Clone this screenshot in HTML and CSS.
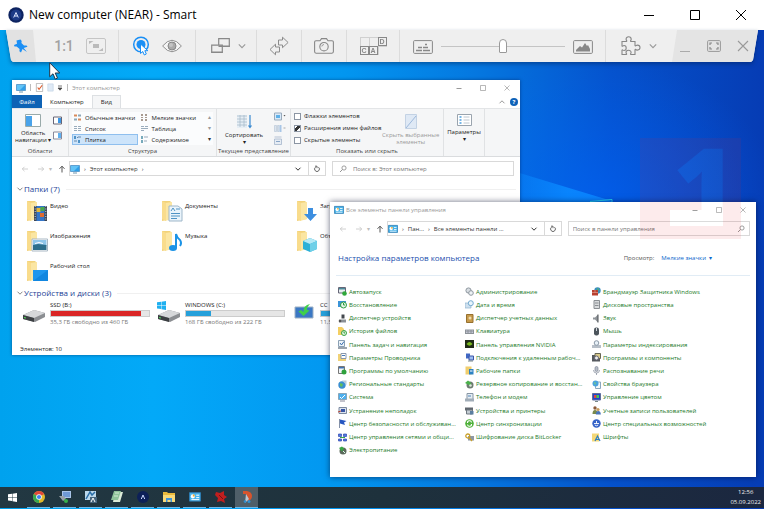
FILE: index.html
```html
<!DOCTYPE html>
<html lang="ru">
<head>
<meta charset="utf-8">
<title>New computer (NEAR) - Smart</title>
<link rel="stylesheet" href="styles.css">
</head>
<body>
<svg class="defs" aria-hidden="true">
  <symbol id="folder" viewBox="0 0 22 22"><path d="M1 1h8l2 2v16l-10 2z" fill="#f2d27a"/><path d="M4 3l7-1v17l-7 2z" fill="#fbe6a3"/><path d="M1 1l4 2v18l-4-2z" fill="#f9dc8c"/></symbol>
  <symbol id="monitor" viewBox="0 0 10 10"><path d="M.5 1.500h9v6h-9z" fill="#2f9fe8" stroke="#3b7fb8" stroke-width=".6"/><path d="M1 2h8l-5 5H1z" fill="#62c3f6"/><path d="M3 9h4" stroke="#6f96b0"/></symbol>
  <symbol id="panel" viewBox="0 0 10 10"><path d="M.4 1.400h9.200v7H.4z" fill="#49b4ea" stroke="#2d7db4" stroke-width=".8"/><circle cx="3.200" cy="4.500" r="1.700" fill="#fff"/><path d="M3.200 4.500V2.800A1.700 1.700 0 0 1 4.900 4.500z" fill="#f2a62b"/><path d="M6 3.500h2.500M6 5.500h2.500M2 7.200h6.500" stroke="#fff" stroke-width=".8"/></symbol>
  <symbol id="search" viewBox="0 0 8 8"><circle cx="5" cy="3" r="2.100" fill="none" stroke="currentColor" stroke-width=".8"/><path d="M3.500 4.500L1 7" stroke="currentColor" stroke-width=".9"/></symbol>
  <symbol id="back" viewBox="0 0 8 8"><path d="M7 4H1.300M3.500 1.800L1.300 4l2.200 2.200" fill="none" stroke="currentColor" stroke-width=".8"/></symbol>
  <symbol id="next" viewBox="0 0 8 8"><path d="M1 4h5.700M4.500 1.800L6.700 4 4.500 6.200" fill="none" stroke="currentColor" stroke-width=".8"/></symbol>
  <symbol id="up" viewBox="0 0 8 8"><path d="M4 7.500V1.200M1.500 3.800L4 1.200l2.500 2.600" fill="none" stroke="currentColor" stroke-width="1"/></symbol>
  <symbol id="down" viewBox="0 0 8 8"><path d="M1.500 2.700L4 5.200l2.500-2.500" fill="none" stroke="currentColor" stroke-width="1"/></symbol>
  <symbol id="refresh" viewBox="0 0 8 8"><path d="M5.500 2.200A2.400 2.400 0 1 1 2.500 2.200M2 1.200h2v2" fill="none" stroke="currentColor" stroke-width=".9"/></symbol>
  <symbol id="min" viewBox="0 0 8 8"><path d="M1.500 4.500h5" stroke="currentColor" stroke-width="1"/></symbol>
  <symbol id="max" viewBox="0 0 8 8"><path d="M1.500 1.500h5v5h-5z" fill="none" stroke="currentColor" stroke-width=".7"/></symbol>
  <symbol id="close" viewBox="0 0 8 8"><path d="M1.500 1.500l5 5m0-5l-5 5" stroke="currentColor" stroke-width=".7"/></symbol>
  <symbol id="chev" viewBox="0 0 10 10"><path d="M1 3l4 4 4-4" fill="none" stroke="currentColor" stroke-width="1.400"/></symbol>
  <symbol id="drive" viewBox="0 0 24 16"><path d="M1 8L12 3l11 3v4l-10 5L1 12z" fill="#8b8e92"/><path d="M1 8L12 3l11 3-11 5z" fill="#d6d8da"/><path d="M1 8l11 3v4L1 12z" fill="#3c4043"/><path d="M2 10.500l2 .5" stroke="#52e05a"/></symbol>
  <symbol id="win" viewBox="0 0 10 10"><path d="M0 1.500L4.500.9v3.800H0zM5 .8L10 0v4.700H5zM0 5.200h4.500V9L0 8.400zM5 5.200h5V10l-5-.8z" fill="currentColor"/></symbol>
</svg>

<header class="titlebar">
  <svg class="app-logo" viewBox="0 0 16 16"><circle cx="8" cy="8" r="7.700" fill="#0d2360"/><circle cx="8" cy="8" r="5.500" fill="#1c3a86"/><path d="M5.700 10.500L8 5.500l2.300 5M6.600 9h2.800" fill="none" stroke="#dce6ff" stroke-width="1"/></svg>
  <h1>New computer (NEAR) - Smart</h1>
  <button aria-label="Minimize"><svg viewBox="0 0 12 12"><path d="M1 6.500h10" stroke="#000"/></svg></button>
  <button aria-label="Maximize"><svg viewBox="0 0 12 12"><path d="M1.500 1.500h9v9h-9z" fill="none" stroke="#000"/></svg></button>
  <button aria-label="Close"><svg viewBox="0 0 12 12"><path d="M1 1l10 10M11 1L1 11" stroke="#000"/></svg></button>
</header>

<main class="desktop">
  <svg class="beam" viewBox="0 0 764 479" preserveAspectRatio="none" aria-hidden="true">
    <defs>
      <linearGradient id="bm"><stop offset="0" stop-color="#0a8cff" stop-opacity=".2"/><stop offset=".6" stop-color="#0a88ff" stop-opacity=".9"/><stop offset="1" stop-color="#0a80ff"/></linearGradient>
    </defs>
    <path d="M500 137L612 171v28H500z" fill="url(#bm)"/>
    <path d="M590 171.500l22-2v3" fill="none" stroke="#25d5f5"/>
  </svg>

  <div class="toolbar-shadow">
    <div class="toolbar">
      <div class="group pin"><button aria-label="Pin"><svg width="16" height="16" viewBox="0 0 16 16"><path d="M3 2.500L7 1.500l1.200 1.400-.3 2 2.600 2.700 2.500-.2 1 1.400-3.800 1.300 3.300 4-4.500-3-1.500 3.400-1.600-1.300.2-2.200-3-2.600-2.100.2L.5 7l3-1.300z" transform="translate(.5 0)" fill="#1a8ff5"/></svg></button></div>
      <div class="group g-scale">
        <button class="ratio">1:1</button>
        <button aria-label="Fit"><svg width="20" height="16" viewBox="0 0 20 16"><rect x=".5" y=".5" width="19" height="15" rx="1.500" fill="none" stroke="#c5c5c5"/><path d="M3 6V3h4.500zM17 10v3h-4.500z" fill="#bbb"/><rect x="7" y="6" width="6" height="4" fill="#bbb"/></svg></button>
      </div>
      <div class="group g-view">
        <button aria-label="Control"><svg width="18" height="20" viewBox="0 0 18 20"><circle cx="9" cy="8.500" r="7.300" fill="none" stroke="#1a8ff5" stroke-width="1.500"/><circle cx="9" cy="8.500" r="4.500" fill="#1a8ff5"/><path d="M8.500 8v9.500l2.300-2 1.500 3.500 2-1-1.500-3.300h3z" fill="#fff" stroke="#1a8ff5"/></svg></button>
        <button aria-label="View"><svg width="20" height="14" viewBox="0 0 20 14"><path d="M.6 7Q10-4.500 19.400 7 10 18.500.6 7z" fill="#f4f4f4" stroke="#8f8f8f"/><circle cx="10" cy="7" r="4" fill="#aaa" stroke="#888"/><circle cx="9" cy="6" r="2" fill="#c4c4c4"/></svg></button>
      </div>
      <div class="group g-screens">
        <button aria-label="Monitors"><svg width="19" height="16" viewBox="0 0 19 16"><path d="M.7 7.200h10.600v7.300H.7zM7.700 7V.7h10.600v7.800h-7" fill="none" stroke="#888" stroke-width="1.200"/><path d="M.5 14.300h11M7.500 8.300h11" stroke="#888" stroke-width="1.600"/></svg></button>
        <button aria-label="Monitor list"><svg width="8" height="8"><use href="#chev"/></svg></button>
      </div>
      <div class="group g-one"><button aria-label="Transfer"><svg width="20" height="20" viewBox="0 0 20 20"><path d="M9.500 4h4V1.200l5.600 5.300-5.600 5.200V9h-4zM10.500 11h-4V8.200L1 13.500l5.500 5.300V16h4z" fill="none" stroke="#8c8c8c"/></svg></button></div>
      <div class="group g-one"><button aria-label="Screenshot"><svg width="20" height="16" viewBox="0 0 20 16"><path d="M2 2.700h4L7.500.6h5L14 2.700h4q1.400 0 1.400 1.400v9.500q0 1.600-1.400 1.600H2Q.6 15.200.6 13.600V4.100Q.6 2.700 2 2.700z" fill="none" stroke="#888" stroke-width="1.100"/><circle cx="10" cy="8.700" r="4.200" fill="none" stroke="#888" stroke-width="1.100"/><path d="M7.800 8.500Q8 6.500 10 6.500" fill="none" stroke="#888" stroke-width=".8"/></svg></button></div>
      <div class="group g-keys"><button class="keys" aria-label="Send Ctrl Alt Del"><span class="key-row"><i></i><i></i><kbd>D</kbd></span><span class="key-row"><kbd>C</kbd><kbd>A</kbd><i></i></span></button></div>
      <div class="group g-quality">
        <svg width="20" height="14" viewBox="0 0 20 14"><rect x=".6" y=".6" width="18.800" height="12.800" rx="1" fill="none" stroke="#888"/><path d="M3 10.500h6M10 10.500h7M5 7.500h4M10 7.500h5M12 4.500h2" stroke="#888" stroke-width="1.600"/></svg>
        <input type="range" min="0" max="100" value="50" aria-label="Quality">
        <svg width="20" height="14" viewBox="0 0 20 14"><rect x=".6" y=".6" width="18.800" height="12.800" rx="1" fill="none" stroke="#888"/><path d="M3 11.500V10l4-4 2 1.500L12 3l2 3 1-1 2 4v2.500z" fill="#888"/></svg>
      </div>
      <div class="group g-plugins">
        <button aria-label="Plugins"><svg width="20" height="20" viewBox="0 0 20 20"><path d="M1 5.500h4.500c.8-.4-.4-1.300-.4-2.300C5 1.800 6.200.8 7.600.8S10.200 1.800 10.200 3.200c0 1-1.200 1.900-.4 2.300H14v4c.5 1 1.300-.4 2.400-.4 1.400 0 2.600 1.100 2.600 2.500s-1.200 2.500-2.600 2.500c-1.100 0-1.900-1.300-2.400-.4V18.500H9.800c-.8-.4.3-1 .3-2 0-1.300-1.100-2.200-2.500-2.200S5 15.200 5 16.500c0 1 1.200 1.600.4 2H1v-4.300c.4-.8 1 .3 2 .3 1.300 0 2.200-1.200 2.200-2.500S4.300 9.500 3 9.500c-1 0-1.600 1.200-2 .4z" fill="none" stroke="#888" stroke-width="1.100"/></svg></button>
        <button aria-label="Plugin list"><svg width="8" height="8"><use href="#chev"/></svg></button>
      </div>
      <div class="group g-window">
        <button aria-label="Hide"><svg width="12" height="14" viewBox="0 0 12 14"><path d="M1 12.500h10" stroke="#aaa"/></svg></button>
        <button aria-label="Full screen"><svg width="14" height="12" viewBox="0 0 14 12"><rect x=".6" y=".6" width="12.800" height="10.800" rx="1" fill="none" stroke="#999"/><path d="M3 5V3h2M9 3h2v2M11 7v2H9M5 9H3V7" fill="none" stroke="#888" stroke-width="1.200"/></svg></button>
        <button aria-label="Disconnect"><svg width="12" height="12" viewBox="0 0 12 12"><path d="M1 1l10 10M11 1L1 11" stroke="#999" stroke-width="1.100"/></svg></button>
      </div>
    </div>
  </div>

  <section class="window explorer">
    <div class="w-title">
      <svg class="i10"><use href="#monitor"/></svg><span class="bar"></span>
      <svg class="i9" viewBox="0 0 10 10"><path d="M1.500.5h7v9h-7z" fill="#fff" stroke="#999" stroke-width=".7"/><path d="M3 5l1.500 2L8 2.500" fill="none" stroke="#e05a2a" stroke-width="1.200"/></svg>
      <svg class="i9" viewBox="0 0 10 10"><path d="M2 1h6v8H2z" fill="#dfeaf6" stroke="#bfd0e4" stroke-width=".7"/></svg>
      <svg class="i6" viewBox="1 1 6 6"><path d="M2 2h4M2 4l2 2.200L6 4z" fill="#444" stroke="#444" stroke-width=".7"/></svg><span class="bar"></span>
      <h2>Этот компьютер</h2>
      <button aria-label="Свернуть"><svg class="i8"><use href="#min"/></svg></button>
      <button aria-label="Развернуть"><svg class="i8"><use href="#max"/></svg></button>
      <button aria-label="Закрыть"><svg class="i8"><use href="#close"/></svg></button>
    </div>
    <nav class="tabs">
      <button class="file">Файл</button><button>Компьютер</button><button class="on">Вид</button>
      <span class="grow"></span>
      <svg class="i8 muted flip"><use href="#down"/></svg>
      <button class="help" aria-label="Справка">?</button>
    </nav>
    <div class="ribbon">
      <div class="rg r-areas">
        <div class="rg-body">
          <button class="big"><svg width="16" height="13" viewBox="0 0 16 13"><path d="M.5.500h15v12H.5z" fill="#fff" stroke="#9aa"/><path d="M1 2h6v10H1z" fill="#4aa3ea"/></svg><span>Область<br>навигации ▾</span></button>
          <div class="stack">
            <button aria-label="Область просмотра"><svg class="i9" viewBox="0 0 9 9"><path d="M.5 1h8v7h-8z" fill="#fff" stroke="#667"/><path d="M5 2h3v5H5z" fill="#3d97e4"/></svg></button>
            <button aria-label="Область сведений"><svg class="i9" viewBox="0 0 9 9"><path d="M.5 1h8v7h-8z" fill="#fff" stroke="#889"/><path d="M5 2h3v5H5z" fill="#5fb0f0"/></svg></button>
          </div>
        </div>
        <div class="rg-name">Области</div>
      </div>
      <div class="rg r-layout">
        <div class="rg-body gallery">
          <button><svg class="i9" viewBox="0 0 9 9"><path d="M1 1.500h3v2H1zM5 5.500h3v2H5z" fill="#d98a5a"/><path d="M5 1.500h3v2H5zM1 5.500h3v2H1z" fill="#8ca7b8"/></svg>Обычные значки</button>
          <button><svg class="i9" viewBox="0 0 9 9"><path d="M1 1h2v2H1zM5 1h2v2H5zM1 4h2v1H1zM5 4h2v1H5zM1 6h2v2H1zM5 6h2v2H5z" fill="#a89a90"/></svg>Мелкие значки</button>
          <button><svg class="i9" viewBox="0 0 9 9"><path d="M1 2.500h3M5 2.500h3M1 4.500h3M5 4.500h3M1 6.500h3M5 6.500h3" stroke="#9aacbc"/></svg>Список</button>
          <button><svg class="i9" viewBox="0 0 9 9"><path d="M1 2.500h3M5 2.500h3M1 4.500h7M1 6.500h3" stroke="#9aacbc"/></svg>Таблица</button>
          <button class="sel"><svg class="i9" viewBox="0 0 9 9"><path d="M1 1h2v3H1zM5 5h2v3H5z" fill="#4f93c8"/><path d="M4 2.500h1M1 6h3M5 2h3" stroke="#68a"/></svg>Плитка</button>
          <button><svg class="i9" viewBox="0 0 9 9"><path d="M1 1h2v3H1zM1 5h2v3H1z" fill="#7ab"/><path d="M4 2h4M4 6h3" stroke="#9ab"/></svg>Содержимое</button>
          <div class="scroll"><span>▴</span><span>▾</span><span class="dark">▾</span></div>
        </div>
        <div class="rg-name">Структура</div>
      </div>
      <div class="rg r-current">
        <div class="rg-body">
          <button class="big"><svg width="16" height="15" viewBox="0 0 16 15"><path d="M1 1h10v13H1z" fill="#e6eef5"/><path d="M1 2h10M1 5h10M1 8h10M1 11h10M4 1v12M8 1v12" stroke="#a9bccc" stroke-width=".8"/><path d="M14 1v12M12.500 11.500L14 13.500l1.500-2" fill="none" stroke="#3b8ad0" stroke-width="1.200"/></svg><span>Сортировать<br>▾</span></button>
          <div class="stack three">
            <button aria-label="Группировать"><svg class="i12" viewBox="0 0 12 9"><path d="M.5 1h7v7h-7z" fill="#d8e9f8" stroke="#9ab"/><path d="M2 3h4v3H2z" fill="#5fb0e8"/><path d="M9.500 3h2L10.500 4.500z" fill="#555"/></svg></button>
            <button aria-label="Добавить столбцы"><svg class="i12" viewBox="0 0 12 9"><path d="M.5 1.500h2v6h-2zM3.500 1.500h1.500v6H3.500z" fill="#dbe4ee" stroke="#b4c3d4" stroke-width=".6"/><path d="M5.500 1h2v7h-2z" fill="#a8c6e6"/><path d="M9.500 4h2" stroke="#aaa"/></svg></button>
            <button aria-label="Размер столбцов"><svg class="i12" viewBox="0 0 12 9"><path d="M.5 3h7v5.500h-7zM.5 1h7" fill="#e6ecf3" stroke="#a4b6cc" stroke-width=".8"/><path d="M2 5.500h4" stroke="#8aa6c8"/></svg></button>
          </div>
        </div>
        <div class="rg-name">Текущее представление</div>
      </div>
      <div class="rg r-show">
        <div class="rg-body">
          <div class="checks">
            <label><input type="checkbox">Флажки элементов</label>
            <label><input type="checkbox" checked>Расширения имен файлов</label>
            <label><input type="checkbox">Скрытые элементы</label>
          </div>
          <button class="big off"><svg width="12" height="15" viewBox="0 0 12 15"><path d="M.5.500h11v14H.5z" fill="#dfe9f5" stroke="#c3d2e4"/><path d="M1 14L11 2" stroke="#9db9dc"/></svg><span>Скрыть выбранные<br>элементы</span></button>
        </div>
        <div class="rg-name">Показать или скрыть</div>
      </div>
      <div class="rg r-params">
        <div class="rg-body"><button class="big"><svg width="15" height="12" viewBox="0 0 15 12"><path d="M.5.500h14v11H.5z" fill="#fff" stroke="#9aa4ae"/><path d="M2.500 3h2M2.500 6h2M2.500 9h2" stroke="#4a9fe0" stroke-width="1.300"/><path d="M6.500 3h6M6.500 6h6M6.500 9h6" stroke="#bcc6d0"/></svg><span>Параметры<br>▾</span></button></div>
      </div>
    </div>
    <div class="nav">
      <button class="dis" aria-label="Назад"><svg class="i8"><use href="#back"/></svg></button>
      <button class="dis" aria-label="Вперед"><svg class="i8"><use href="#next"/></svg></button>
      <span class="dot">▾</span>
      <button aria-label="Вверх"><svg class="i8"><use href="#up"/></svg></button>
      <div class="address"><svg class="i10"><use href="#monitor"/></svg><span>›</span><a href="#">Этот компьютер</a><span>›</span><span class="grow"></span><svg class="i8"><use href="#down"/></svg></div>
      <button class="reload" aria-label="Обновить"><svg class="i8"><use href="#refresh"/></svg></button>
      <label class="search"><svg class="i8"><use href="#search"/></svg><input type="text" placeholder="Поиск в: Этот компьютер" aria-label="Поиск в: Этот компьютер"></label>
    </div>
    <div class="files">
      <h3><svg class="i8"><use href="#down"/></svg>Папки (7)</h3>
      <ul class="tiles">
        <li><svg class="pic" viewBox="0 0 22 22"><use href="#folder"/><path d="M8 6h13v15H8z" fill="#3d4656"/><path d="M10.500 6h8v15h-8z" fill="#3576c8"/><path d="M10.500 8h4v4h-4z" fill="#e4b73a"/><path d="M14 13h4v4h-4z" fill="#e06b2f"/><path d="M14.500 7h4v4h-4z" fill="#4aa84c"/><path d="M9.200 6v15M19.800 6v15" stroke="#cfd6df" stroke-dasharray="1 1.500"/></svg>Видео</li>
        <li><svg class="pic" viewBox="0 0 22 22"><use href="#folder"/><path d="M8 6h9l4 3v12H8z" fill="#eaf4fb" stroke="#9fb7c9"/><path d="M10 11l2-3 2 3M15 9h4M10 13.500h9M10 16h9M10 18.500h6" fill="none" stroke="#4f93c4"/></svg>Документы</li>
        <li><svg class="pic" viewBox="0 0 22 22"><use href="#folder"/><path d="M12 8h5v6h4l-6.500 7L8 14h4z" fill="#3d8fe0"/></svg>Загрузки</li>
        <li><svg class="pic" viewBox="0 0 22 22"><use href="#folder"/><path d="M6 9h15.500v12H6z" fill="#fff" stroke="#a9b8c4"/><path d="M7 10h13.500v6H7z" fill="#8fc6ea"/><path d="M7 15l5-1 8.500 1v5H7z" fill="#2d6f8c"/><path d="M9 13.500q4-2 8 0" stroke="#fff" fill="none"/></svg>Изображения</li>
        <li><svg class="pic" viewBox="0 0 22 22"><use href="#folder"/><ellipse cx="12" cy="18" rx="4" ry="3" fill="#1b93e6"/><path d="M15 18V4q1 4 4 6 2 3 0 6" fill="none" stroke="#1b93e6" stroke-width="2"/></svg>Музыка</li>
        <li><svg class="pic" viewBox="0 0 22 22"><use href="#folder"/><path d="M7 11l7-3 7 3v8l-7 3-7-3z" fill="#2bb0d6"/><path d="M7 11l7-3 7 3-7 3z" fill="#b5e9f5"/><path d="M14 14l7-3v8l-7 3z" fill="#6fd0e8"/></svg>Объекты</li>
        <li><svg class="pic" viewBox="0 0 22 22"><use href="#folder"/><path d="M7 10h15v11H7z" fill="#1f97ee"/><path d="M7 21L22 10v11z" fill="#1287e0"/></svg>Рабочий стол</li>
      </ul>
      <h3><svg class="i8"><use href="#down"/></svg>Устройства и диски (3)</h3>
      <ul class="tiles drives">
        <li><svg class="disk" viewBox="0 0 24 22"><use href="#drive" y="6" width="24" height="16"/></svg><div><b>SSD (B:)</b><div class="meter"><i class="red" style="width:92%"></i></div><small>35,3 ГБ свободно из 460 ГБ</small></div></li>
        <li><svg class="disk" viewBox="0 0 24 22"><use href="#drive" y="6" width="24" height="16"/><use href="#win" x="0" y="0" width="9" height="9" color="#1fb0f0"/></svg><div><b>WINDOWS (C:)</b><div class="meter"><i style="width:25%"></i></div><small>168 ГБ свободно из 222 ГБ</small></div></li>
        <li><svg class="disk" viewBox="0 0 24 22"><path d="M3 6h18v11H3z" fill="#3b78c4" stroke="#9fb1c4"/><path d="M6.500 10.500l2.500-1.500 2.500 2Q11 4.500 18 3q-3.500 3.500-3 6l2.500.5-6 5.500z" fill="#3fd04a"/></svg><div><b>CC</b><div class="meter"><i style="width:60%"></i></div><small>11,5 ГБ</small></div></li>
      </ul>
    </div>
    <div class="status">Элементов: 10</div>
  </section>

  <section class="window control">
    <div class="w-title">
      <svg class="i10"><use href="#panel"/></svg>
      <h2>Все элементы панели управления</h2>
      <button aria-label="Свернуть"><svg class="i8"><use href="#min"/></svg></button>
      <button aria-label="Развернуть"><svg class="i8"><use href="#max"/></svg></button>
      <button aria-label="Закрыть"><svg class="i8"><use href="#close"/></svg></button>
    </div>
    <div class="nav">
      <button class="dis" aria-label="Назад"><svg class="i8"><use href="#back"/></svg></button>
      <button class="dis" aria-label="Вперед"><svg class="i8"><use href="#next"/></svg></button>
      <span class="dot">▾</span>
      <button aria-label="Вверх"><svg class="i8"><use href="#up"/></svg></button>
      <div class="address"><svg class="i10"><use href="#panel"/></svg><span>›</span><a href="#">Пан...</a><span>›</span><a href="#">Все элементы панели ...</a><span class="grow"></span><svg class="i8"><use href="#down"/></svg></div>
      <button class="reload" aria-label="Обновить"><svg class="i8"><use href="#refresh"/></svg></button>
      <label class="search"><input type="text" placeholder="Поиск в панели управления" aria-label="Поиск в панели управления"><svg class="i8"><use href="#search"/></svg></label>
    </div>
    <div class="cp-head">
      <h3>Настройка параметров компьютера</h3>
      <span class="by">Просмотр:</span><button>Мелкие значки <span>▾</span></button>
    </div>
    <div class="cp-grid">
      <ul>
        <li><a href="#"><svg viewBox="0 0 9 9"><path d="M.5.500h7v5.500h-7z" fill="#e8eef0" stroke="#667"/><path d="M1 1h6v1.500H1z" fill="#4b8a99"/><circle cx="6.500" cy="6.500" r="2.300" fill="#2fa83a"/></svg>Автозапуск</a></li>
        <li><a href="#"><svg viewBox="0 0 9 9"><path d="M0 1h8v6H0z" fill="#3b94d8"/><circle cx="5.500" cy="5" r="3" fill="#e7f6e8" stroke="#2f9e42"/><path d="M5.500 3v2h1.500" stroke="#2f9e42" fill="none"/></svg>Восстановление</a></li>
        <li><a href="#"><svg viewBox="0 0 9 9"><path d="M1 5.500h7v3H1z" fill="#8b9096"/><path d="M3.500.5h3v4h-3z" fill="#43484e"/><circle cx="2" cy="7" r="1.300" fill="#555"/></svg>Диспетчер устройств</a></li>
        <li><a href="#"><svg viewBox="0 0 9 9"><path d="M0 0h4l2 2v6H0z" fill="#f4cf62"/><circle cx="6" cy="6" r="2.500" fill="#dff3df" stroke="#3aa342"/><path d="M6 4.500V6h1" stroke="#3aa342" fill="none"/></svg>История файлов</a></li>
        <li><a href="#"><svg viewBox="0 0 9 9"><path d="M.5.500h6v6h-6z" fill="#edf3f8" stroke="#8aa0b4"/><path d="M2 3l1.500 2L6 1.500" fill="none" stroke="#3a6fb0"/><path d="M0 7.500h9v1H0z" fill="#34465a"/></svg>Панель задач и навигация</a></li>
        <li><a href="#"><svg viewBox="0 0 9 9"><path d="M0 1h8v7H0z" fill="#f1d276"/><path d="M3 .5h5v5H3z" fill="#fff" stroke="#8a97ab"/><path d="M4 2.500h3" stroke="#467ab8"/></svg>Параметры Проводника</a></li>
        <li><a href="#"><svg viewBox="0 0 9 9"><path d="M.5.500h6v7h-6z" fill="#f2f5f7" stroke="#777"/><path d="M1 1h5v1.500H1z" fill="#3f74b4"/><circle cx="6" cy="6" r="2.500" fill="#2fa13c"/></svg>Программы по умолчанию</a></li>
        <li><a href="#"><svg viewBox="0 0 9 9"><circle cx="4" cy="5" r="3.700" fill="#3a8fd0"/><path d="M2 3l3 1-1 3-2-1z" fill="#5fbf5a"/><path d="M4 .5h4.500V5z" fill="#b8cbd8"/></svg>Региональные стандарты</a></li>
        <li><a href="#"><svg viewBox="0 0 9 9"><path d="M.5.500h8v6h-8z" fill="#4db0ee" stroke="#8ba6b8"/><path d="M2 4l1.500 1.500L7 2" fill="none" stroke="#fff"/><path d="M2 8h5" stroke="#889"/></svg>Система</a></li>
        <li><a href="#"><svg viewBox="0 0 9 9"><path d="M1 1.500h7.500v6H1z" fill="#dbe3ee" stroke="#7c8aa0"/><path d="M3 3h4v3H3z" fill="#3956a4"/><path d="M0 6l3-1" stroke="#b43"/></svg>Устранение неполадок</a></li>
        <li><a href="#"><svg viewBox="0 0 9 9"><path d="M1.500 0v9" stroke="#8390a8"/><path d="M2 .5L8.500 2 6 3.500 7 6 2 4.500z" fill="#2756c0"/></svg>Центр безопасности и обслуживан...</a></li>
        <li><a href="#"><svg viewBox="0 0 9 9"><path d="M.5 1h3v2.500h-3zM5.500 1h3v2.500h-3zM.5 6h3v2h-3zM5.500 6h3v2h-3z" fill="#4d7ce0" stroke="#3246b0" stroke-width=".7"/><path d="M2 4.500h5" stroke="#38a848"/></svg>Центр управления сетями и общи...</a></li>
        <li><a href="#"><svg viewBox="0 0 9 9"><circle cx="5" cy="5" r="3.500" fill="#5c6a5c"/><path d="M1 2l3-1.500 2 2-2 3z" fill="#39a845"/><path d="M5 5l2 2" stroke="#dfe"/></svg>Электропитание</a></li>
      </ul>
      <ul>
        <li><a href="#"><svg viewBox="0 0 9 9"><circle cx="3.500" cy="3.500" r="2.600" fill="#d8dde2" stroke="#8e979f"/><circle cx="6" cy="6" r="2.300" fill="#eef2f5" stroke="#8e979f"/></svg>Администрирование</a></li>
        <li><a href="#"><svg viewBox="0 0 9 9"><path d="M0 3h6v5H0z" fill="#cfe0ee" stroke="#8db1cf" stroke-width=".7"/><circle cx="5.800" cy="3.200" r="2.500" fill="#e8f4fb" stroke="#74aacf"/></svg>Дата и время</a></li>
        <li><a href="#"><svg viewBox="0 0 9 9"><path d="M1.500.5h6.500v8H1.500z" fill="#c79a4a" stroke="#96702f"/><circle cx="5" cy="4" r="1.500" fill="#efdcae"/></svg>Диспетчер учетных данных</a></li>
        <li><a href="#"><svg viewBox="0 0 9 9"><path d="M0 2.500h9v4.500H0z" fill="#8c9298"/><path d="M1 4h7M1 5.500h7" stroke="#dde" stroke-width=".7" stroke-dasharray="1 .5"/></svg>Клавиатура</a></li>
        <li><a href="#"><svg viewBox="0 0 9 9"><path d="M0 0h9v8H0z" fill="#1f2a16"/><path d="M1.500 4q3-4 6 0-3 3.500-6 0z" fill="#79b81f"/></svg>Панель управления NVIDIA</a></li>
        <li><a href="#"><svg viewBox="0 0 9 9"><path d="M1 .5h4v5H1z" fill="#4068c4"/><path d="M4 3h4.500v4H4z" fill="#9bbcf0" stroke="#3d55a8"/><path d="M3 8h5" stroke="#788"/></svg>Подключения к удаленным рабоч...</a></li>
        <li><a href="#"><svg viewBox="0 0 9 9"><path d="M.5.500h6v8h-6z" fill="#f0ce6e"/><path d="M4 3h4.500v5.500H4z" fill="#2d82c4"/><path d="M5 5h2.500" stroke="#fff"/></svg>Рабочие папки</a></li>
        <li><a href="#"><svg viewBox="0 0 9 9"><circle cx="5" cy="5" r="3.500" fill="#6d7a70"/><path d="M0 3l3-2.500L6 3v3z" fill="#4ab14a"/><circle cx="5.500" cy="5.500" r="1.300" fill="#dce6dc"/></svg>Резервное копирование и восстан...</a></li>
        <li><a href="#"><svg viewBox="0 0 9 9"><path d="M2 .5h6v6H2z" fill="#e6edf3" stroke="#8796a5"/><path d="M0 5.500h9V8.500H0z" fill="#a1adb8"/><path d="M3 3h3" stroke="#4a80b4"/></svg>Телефон и модем</a></li>
        <li><a href="#"><svg viewBox="0 0 9 9"><path d="M0 1.500h8v3H0z" fill="#61676e"/><path d="M1.500 4h6v4h-6z" fill="#c4ccd3" stroke="#6f7880"/><path d="M5 5h3.500v3.500H5z" fill="#5b7ea0"/></svg>Устройства и принтеры</a></li>
        <li><a href="#"><svg viewBox="0 0 9 9"><circle cx="4.500" cy="4.500" r="4.300" fill="#4fb13a"/><path d="M2.500 4a2 2 0 0 1 4-.5M6.500 5a2 2 0 0 1-4 .5" fill="none" stroke="#fff" stroke-width="1.100"/></svg>Центр синхронизации</a></li>
        <li><a href="#"><svg viewBox="0 0 9 9"><path d="M3 3h6v4.500H3z" fill="#8e98a4"/><circle cx="2.800" cy="3" r="2" fill="none" stroke="#c9a02c" stroke-width="1.300"/><path d="M4 4.500L7 8" stroke="#c9a02c" stroke-width="1.300"/></svg>Шифрование диска BitLocker</a></li>
      </ul>
      <ul>
        <li><a href="#"><svg viewBox="0 0 9 9"><circle cx="5.500" cy="3.500" r="3.200" fill="#3a8fc0"/><path d="M0 3h6v5.500H0z" fill="#b8402f"/><path d="M0 5.500h6M3 3v2.500" stroke="#e8a99c" stroke-width=".6"/><path d="M5 1l2 1-1 2z" fill="#56b85a"/></svg>Брандмауэр Защитника Windows</a></li>
        <li><a href="#"><svg viewBox="0 0 9 9"><path d="M2 .5h5.500v8H2z" fill="#d8dadc" stroke="#8b8f93"/><path d="M3 3h3.500M3 5.500h3.500" stroke="#8b8f93"/></svg>Дисковые пространства</a></li>
        <li><a href="#"><svg viewBox="0 0 9 9"><path d="M1 3.500h2L6 .5v8l-3-3H1z" fill="#8f9499"/><path d="M6 .5v8" stroke="#4c5054"/></svg>Звук</a></li>
        <li><a href="#"><svg viewBox="0 0 9 9"><rect x="2" y=".5" width="5" height="8" rx="2.200" fill="#4d555c"/><path d="M4.500 1v3" stroke="#cfd6dc"/></svg>Мышь</a></li>
        <li><a href="#"><svg viewBox="0 0 9 9"><path d="M0 5h9v3H0z" fill="#b7bfc8"/><circle cx="4.500" cy="3" r="2.300" fill="#e8f1f8" stroke="#8a98a6"/></svg>Параметры индексирования</a></li>
        <li><a href="#"><svg viewBox="0 0 9 9"><path d="M0 2h8v6.500H0z" fill="#55595d"/><path d="M3 .5h5.500v5H3z" fill="#d9c98a" stroke="#665"/><circle cx="4.500" cy="5" r="2" fill="#eee" stroke="#667"/></svg>Программы и компоненты</a></li>
        <li><a href="#"><svg viewBox="0 0 9 9"><rect x="3" y=".5" width="3" height="5" rx="1.500" fill="#b8bec8" stroke="#7e8696" stroke-width=".7"/><path d="M1.500 4q0 3 3 3t3-3M4.500 7v2" fill="none" stroke="#7e8696" stroke-width=".7"/></svg>Распознавание речи</a></li>
        <li><a href="#"><svg viewBox="0 0 9 9"><path d="M3.500 2h5v6.500h-5z" fill="#f3f7fa" stroke="#8aa7bd"/><circle cx="3.500" cy="3.500" r="3" fill="#49a3dd"/><path d="M2 2l2 1-1 2z" fill="#7ad07a"/></svg>Свойства браузера</a></li>
        <li><a href="#"><svg viewBox="0 0 9 9"><path d="M.5.500h8v6.500h-8z" fill="#2743c8" stroke="#5f6f9a"/><path d="M2 2h2.500v3H2z" fill="#e04444"/><path d="M4.500 2H7v3H4.500z" fill="#42c75a"/><path d="M3 8.500h3" stroke="#788"/></svg>Управление цветом</a></li>
        <li><a href="#"><svg viewBox="0 0 9 9"><circle cx="3" cy="2" r="1.700" fill="#8a5a3a"/><path d="M.5 8q0-4 2.500-4t2.500 4z" fill="#7a8a4a"/><circle cx="6" cy="3.500" r="1.600" fill="#c99b5a"/><path d="M3.800 8.500q0-3.500 2.500-3.500t2.500 3.500z" fill="#4a76b8"/></svg>Учетные записи пользователей</a></li>
        <li><a href="#"><svg viewBox="0 0 9 9"><circle cx="4.500" cy="4.500" r="4.200" fill="#3563c8"/><path d="M2 4.500h5M4.500 2v2.500M2.800 6q1.700 1.500 3.400 0" fill="none" stroke="#fff" stroke-width=".9"/></svg>Центр специальных возможностей</a></li>
        <li><a href="#"><svg viewBox="0 0 9 9"><path d="M0 .5h7v8H0z" fill="#f4d878"/><path d="M3 8l2.500-5L8 8M4 6.500h3" fill="none" stroke="#2f7fc0" stroke-width="1.200"/></svg>Шрифты</a></li>
      </ul>
    </div>
  </section>

  <svg class="mark" viewBox="0 0 101 101">
    <defs><mask id="hole"><rect width="101" height="101" fill="#fff"/><text x="33" y="88" fill="#000">1</text><rect x="30" y="72" width="53" height="16" fill="#000"/></mask></defs>
    <rect width="101" height="101" fill="#ee2030" fill-opacity=".09" mask="url(#hole)"/>
    <g opacity=".06" fill="#fff"><text x="33" y="88">1</text><rect x="30" y="72" width="53" height="16"/></g>
  </svg>

  <svg class="cursor" viewBox="0 0 12 18"><path d="M.7.800v14l3.300-3 2.300 5.300 2.200-1-2.300-5.100h4.500z" fill="#fff" stroke="#234"/></svg>

  <footer class="taskbar">
    <button class="start" aria-label="Пуск"><svg viewBox="0 0 10 10"><use href="#win"/></svg></button>
    <button aria-label="Chrome"><svg viewBox="0 0 12 12"><circle cx="6" cy="6" r="6" fill="#dfb82c"/><path d="M6 6L.8 3A6 6 0 0 1 11.200 3z" fill="#e04a3a"/><path d="M6 6L.8 3A6 6 0 0 0 6 12z" fill="#37a852"/><circle cx="6" cy="6" r="2.800" fill="#fff"/><circle cx="6" cy="6" r="2.100" fill="#3f82ee"/></svg></button>
    <button aria-label="Сеть"><svg viewBox="0 0 12 12"><path d="M3 0h9v7H3z" fill="#a9c4e8"/><path d="M4 1h7v5H4z" fill="#6f99d4"/><path d="M0 5h5l2 3-3 2z" fill="#9aa3a8"/><circle cx="7" cy="10" r="2" fill="#34b04a"/></svg></button>
    <button aria-label="Настройки"><svg viewBox="0 0 12 12"><path d="M0 0h11v9H0z" fill="#bcd8ec"/><path d="M1 8l4-7 2 3 3-3" fill="none" stroke="#2b6fa8" stroke-width="1.500"/><path d="M5 6h7v6H5z" fill="#45647c"/><path d="M6 11l2-4 2 4" stroke="#fff" fill="none"/></svg></button>
    <button aria-label="Редактор"><svg viewBox="0 0 12 12"><path d="M4 1h8l-3 10H2z" fill="#dcebd8"/><path d="M3 0h7L7 9H0z" fill="#8fc49a"/><path d="M4 2h4M3 5h4" stroke="#d4ecd4"/></svg></button>
    <button aria-label="Smart"><svg viewBox="0 0 12 12"><circle cx="6" cy="6" r="6" fill="#0d2058"/><path d="M4.300 8L6 4l1.700 4" fill="none" stroke="#cbd8ff"/></svg></button>
    <button aria-label="Проводник"><svg viewBox="0 0 12 12"><path d="M0 1h4l1 1h7v9H0z" fill="#e9b93c"/><path d="M0 4h12v7H0z" fill="#f8d978"/><path d="M3 11V7h6v4H7.500V9h-3v2z" fill="#3f93d8"/></svg></button>
    <button aria-label="Панель управления"><svg viewBox="0 0 10 10"><use href="#panel"/></svg></button>
    <button aria-label="Утилита"><svg viewBox="0 0 12 12"><path d="M1 1l4 1 4-2 0 4 3 2-3 2 1 4-4-2-4 1 1-4-3-3z" fill="#c01f1f"/><path d="M4 4l4 4" stroke="#7c0f0f"/></svg></button>
    <button class="active" aria-label="Запись"><svg viewBox="0 0 12 12"><path d="M2 0h4q5 1 5 5t-4 5H5V3H2z" fill="#d8542c"/><path d="M5 3l3 5-4 4z" fill="#b9c6d2"/><circle cx="8" cy="10.500" r="1.500" fill="#2f8fd0"/><circle cx="4" cy="10.500" r="1.300" fill="#2f8fd0"/></svg></button>
    <time><span>12:56</span><span>05.09.2022</span></time>
  </footer>
</main>
</body>
</html>
```
FILE: styles.css
```css
* { box-sizing: border-box; }
html, body { height: 100%; margin: 0; }
body {
  display: flex;
  flex-direction: column;
  font-family: "Open Sans", "Noto Sans", sans-serif;
  color: #222;
  overflow: hidden;
}
button, input { font: inherit; color: inherit; }
button { border: 0; padding: 0; background: none; display: flex; align-items: center; justify-content: center; }
ul { list-style: none; margin: 0; padding: 0; }
h1, h2, h3 { margin: 0; font-weight: 400; }
a { color: inherit; text-decoration: none; }
svg { flex: none; display: block; }
.defs { position: absolute; width: 0; height: 0; }
.grow { flex: 1; }
.i6 { width: 6px; height: 6px; }
.i8 { width: 8px; height: 8px; }
.i9 { width: 9px; height: 9px; }
.i10 { width: 10px; height: 10px; }
.i12 { width: 12px; height: 9px; }

/* outer window */
.titlebar { display: flex; align-items: center; height: 30px; flex: none; background: #fff; padding-left: 8px; }
.app-logo { width: 16px; height: 16px; }
.titlebar h1 { flex: 1; margin-left: 5px; font-size: 12px; line-height: 16px; color: #000; }
.titlebar button { width: 46px; height: 30px; }
.titlebar button svg { width: 12px; height: 12px; }

.desktop {
  position: relative;
  flex: 1;
  background:
    radial-gradient(ellipse 24% 30% at 78% 36%, rgba(0, 100, 255, .55), rgba(0, 100, 255, 0)),
    linear-gradient(90deg, #00a2ee 0%, #03a9f8 20%, #0296f0 45%, #0578e0 62%, #0552cc 80%, #063cb4 100%);
}
.beam { position: absolute; inset: 0; width: 100%; height: 100%; }

/* session toolbar */
.toolbar-shadow { position: relative; z-index: 3; margin: 0 6px; filter: drop-shadow(0 2px 2px rgba(0, 30, 80, .45)); }
.toolbar {
  display: flex;
  height: 32px;
  background: #efefef;
  color: #999;
  clip-path: polygon(0 0, 100% 0, calc(100% - 5px) calc(100% - 2px), calc(100% - 7px) 100%, 7px 100%, 5px calc(100% - 2px));
}
.group { display: flex; align-items: center; justify-content: center; gap: 12px; border-right: 1px solid #dcdcdc; }
.pin { width: 30px; background: #e2e2e2; border: 0; clip-path: polygon(0 0, 90% 0, 100% 100%, 0 100%); }
.g-scale { width: 83px; padding-left: 6px; }
.g-view { width: 77px; }
.g-screens { width: 61px; gap: 8px; padding-left: 4px; }
.g-one { width: 45px; }
.g-keys { width: 53px; }
.g-quality { flex: 1; gap: 8px; }
.g-plugins { width: 66px; gap: 8px; border: 0; }
.g-quality svg { margin-top: 1px; }
.g-window { width: 86px; gap: 16px; padding-right: 2px; border: 0; background: #e4e4e4; clip-path: polygon(5px 0, 100% 0, 100% 100%, 0 100%); }
.ratio { font-family: Roboto, sans-serif; font-weight: 500; font-size: 14px; color: #a2a2a2; width: 20px; }
.keys { flex-direction: column; font-family: "Liberation Sans", sans-serif; font-weight: 700; font-size: 7px; line-height: 8px; }
.key-row { display: flex; }
.key-row i, .key-row kbd { width: 9px; height: 9px; border: 1px solid #d0d0d0; border-width: 1px 0 0 1px; font: inherit; text-align: center; }
.key-row kbd { border: 1px solid #888; color: #888; }

.g-quality input { appearance: none; flex: 1; max-width: 124px; min-width: 40px; height: 16px; margin: 0; background: linear-gradient(#c4c4c4, #c4c4c4) center / 100% 1px no-repeat; }
.g-quality input::-webkit-slider-thumb { appearance: none; width: 8px; height: 14px; background: #fff; border: 1px solid #999; border-radius: 4px 4px 1px 1px; }

/* windows on the remote desktop */
.window { position: absolute; background: #fff; font-size: 6px; line-height: 8px; display: flex; flex-direction: column; box-shadow: 0 0 3px rgba(0, 20, 60, .5); overflow: hidden; }
.explorer { left: 12px; top: 50px; width: 508px; height: 275px; }
.control { left: 330px; top: 172px; width: 426px; height: 275px; box-shadow: 0 0 6px rgba(0, 10, 40, .6); }
.w-title { display: flex; align-items: center; height: 15px; padding: 0 2px 0 4px; gap: 2px; color: #999; flex: none; }
.w-title h2 { flex: 1; font-size: 6px; }
.w-title button { width: 22px; }
.w-title .bar { width: 1px; height: 7px; margin: 0 2px; background: #bbb; }

.tabs { display: flex; height: 13px; flex: none; align-items: center; padding-right: 2px; }
.tabs button { height: 13px; padding: 0 8px; }
.tabs .file { width: 30px; background: #0e63b5; color: #fff; }
.tabs .on { background: #f5f6f7; border: 1px solid #dde0e3; border-bottom: 0; }
.tabs .help { width: 8px; height: 8px; padding: 0; margin-left: 4px; border-radius: 50%; background: #0f62b8; color: #fff; font-weight: 700; }
.muted { color: #999; }
.flip { transform: rotate(180deg); }

.ribbon { display: flex; height: 49px; flex: none; background: #f5f6f7; border-top: 1px solid #e3e5e7; border-bottom: 1px solid #dadcde; }
.rg { display: flex; flex-direction: column; border-right: 1px solid #e0e2e4; padding: 3px 3px 0; }
.rg-body { flex: 1; display: flex; justify-content: space-between; align-items: flex-start; }
.rg-name { text-align: center; height: 9px; white-space: nowrap; color: #444; }
.r-areas { width: 57px; }
.r-layout { width: 148px; }
.r-current { width: 74px; padding: 3px 0 0; }
.r-current .rg-body { padding: 0 2px 0 8px; }
.r-show { width: 153px; }
.r-params { width: 41px; padding: 3px 0 0; }
.r-params .rg-body { justify-content: center; }
.big { flex-direction: column; gap: 3px; line-height: 7px; padding-top: 2px; }
.off { color: #999; width: 60px; white-space: nowrap; }
.stack { display: flex; flex-direction: column; gap: 6px; padding: 4px 3px 0 0; }
.three { gap: 3px; padding: 0 2px 0 0; }
.gallery { display: grid; grid-template-columns: 66px 66px 8px; grid-template-rows: repeat(3, 11px); position: static; flex: none; height: 33px; align-content: start; background: #fbfcfd; }
.gallery button { height: 11px; justify-content: flex-start; gap: 3px; padding-left: 1px; white-space: nowrap; }
.gallery .sel { background: #cde4fa; border: 1px solid #8fbfee; padding-left: 0; }
.gallery .scroll { grid-column: 3; grid-row: 1 / 4; display: flex; flex-direction: column; color: #999; }
.scroll span { line-height: 11px; text-align: center; }
.scroll .dark { color: #333; }
.r-layout .rg-name, .r-areas .rg-name { margin-top: auto; }
.checks { display: flex; flex-direction: column; gap: 4px; }
.checks label { display: flex; align-items: center; gap: 3px; white-space: nowrap; }
.checks input { appearance: none; width: 7px; height: 7px; margin: 0; border: 1px solid #8b95a3; background: #fff; }
.checks input:checked { background: linear-gradient(135deg, #fff 30%, #333 30% 70%, #fff 70%); }

.nav { display: flex; align-items: center; height: 23px; padding: 0 6px 0 5px; flex: none; color: #555; }
.nav button { width: 14px; height: 15px; }
.nav .dis { color: #c4c4c4; width: 16px; }
.nav .dot { width: 6px; color: #bbb; }
.address { display: flex; align-items: center; gap: 4px; height: 15px; padding: 0 6px 0 0; border: 1px solid #d9d9d9; color: #333; white-space: nowrap; }
.explorer .address { flex: 1; }
.control .address { flex: 158 1 0; }
.nav .reload { border: 1px solid #d9d9d9; border-left: 0; width: 17px; margin-right: 6px; }
.search { display: flex; align-items: center; gap: 6px; height: 15px; padding: 0 6px; border: 1px solid #d9d9d9; color: #888; }
.search input { flex: 1; min-width: 0; border: 0; outline: 0; padding: 0; background: none; height: 10px; }
.search input::placeholder { color: #777; opacity: 1; }
.explorer .search { width: 182px; }
.control .search { flex: 182 1 0; padding: 0 4px; }

.files { padding: 4px 4px 0; }
.files h3 { display: flex; align-items: center; height: 10px; font-size: 8px; line-height: 10px; color: #1e3f96; }
.files h3 svg { color: #888; }
.files h3::after { content: ""; flex: 1; height: 1px; margin-left: 6px; background: #f0f0f0; }
.tiles { display: grid; grid-template-columns: repeat(3, 135px); grid-auto-rows: 30px; padding: 4px 0 0 10px; }
.tiles li { display: flex; align-items: flex-start; gap: 2px; padding-top: 4px; }
.pic { width: 22px; height: 22px; margin-top: -2px; }
.drives { padding: 2px 0 0 6px; }
.drives li { gap: 4px; padding-top: 1px; }
.disk { width: 24px; height: 22px; }
.drives b { display: block; font-weight: 400; }
.drives small { display: block; font-size: 6px; color: #777; white-space: nowrap; }
.meter { width: 100px; height: 7px; margin: 1px 0; background: #e6e6e6; border: 1px solid #ccc; }
.meter i { display: block; height: 100%; background: #26a0da; }
.meter .red { background: #da2626; }
.status { margin-top: auto; padding: 0 8px 2px; }

.cp-head { display: flex; align-items: center; height: 36px; margin: 0 6px; padding: 0 38px 0 2px; border-bottom: 1px solid #e1ecf5; flex: none; }
.cp-head h3 { flex: 1; font-size: 8px; line-height: 10px; color: #1c4fae; }
.cp-head .by { margin-right: 7px; color: #555; }
.cp-head button { color: #0a66cc; gap: 3px; }
.cp-grid { display: grid; grid-template-columns: repeat(3, 127px); padding: 9px 8px 0; }
.cp-grid ul { display: grid; grid-template-rows: repeat(13, 1fr); height: 172px; }
.cp-grid a { display: flex; align-items: center; gap: 2px; height: 100%; color: #1c7a28; white-space: nowrap; }
.cp-grid svg { width: 9px; height: 9px; }

.mark { position: absolute; z-index: 2; left: 640px; top: 108px; width: 101px; height: 101px; font: 800 108px "Open Sans", sans-serif; overflow: visible; pointer-events: none; }
.cursor { position: absolute; z-index: 4; left: 49px; top: 32px; width: 12px; height: 18px; }

.taskbar { position: absolute; left: 0; right: 0; bottom: 1px; height: 21px; display: flex; align-items: stretch; gap: 3px; padding-left: 1px; background: linear-gradient(90deg, #223842, #1e313c 50%, #1b2740); }
.taskbar button { width: 23px; border-bottom: 1px solid #6cb8ea; }
.taskbar button svg { width: 12px; height: 12px; }
.taskbar .start { border: 0; color: #fff; }
.taskbar .start svg { width: 9px; height: 9px; }
.taskbar .active { background: #4f5f69; }
.taskbar time { margin-left: auto; padding-right: 3px; font-size: 6px; line-height: 10px; color: #eee; display: flex; flex-direction: column; align-items: center; }
```
